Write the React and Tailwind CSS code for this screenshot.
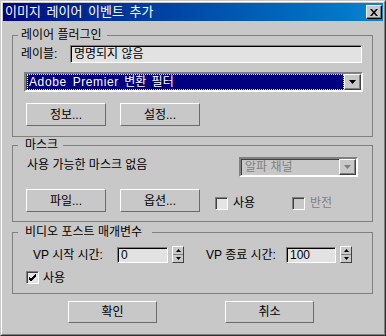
import React from "react";

function Btn({ children, className }) {
  return (
    <div
      className={
        "flex items-center justify-center border border-t-white border-l-white border-r-[#6a6a6a] border-b-[#6a6a6a] leading-[14px] " +
        className
      }
    >
      {children}
    </div>
  );
}

function Check({ checked, disabled }) {
  return (
    <div
      className={
        "w-[13px] h-[13px] border border-t-[#808080] border-l-[#808080] border-r-white border-b-white shadow-[inset_1px_1px_0_#404040] flex items-center justify-center " +
        (disabled ? "bg-[#c8c8c8]" : "bg-[#e4e4e4]")
      }
    >
      {checked && (
        <svg width="9" height="9" viewBox="0 0 9 9">
          <path d="M1 4 L3 6 L8 1 M1 5 L3 7 L8 2 M1 6 L3 8 L8 3" stroke="#000" strokeWidth="1" fill="none" />
        </svg>
      )}
    </div>
  );
}

function Arrow({ disabled }) {
  return (
    <div className="w-[17px] h-[16px] bg-[#c8c8c8] border border-t-white border-l-white border-r-[#404040] border-b-[#404040] shadow-[inset_-1px_-1px_0_#808080] flex items-center justify-center">
      <svg width="7" height="4" viewBox="0 0 7 4">
        <path d="M0 0 H7 L3.5 4 Z" fill={disabled ? "#808080" : "#000"} />
      </svg>
    </div>
  );
}

function Spinner() {
  return (
    <div className="w-[12px] h-[17px] ml-[4px] flex flex-col border border-t-white border-l-white border-r-[#404040] border-b-[#404040] bg-[#c8c8c8]">
      <div className="flex-1 flex items-center justify-center border-b border-b-[#808080]">
        <svg width="5" height="3" viewBox="0 0 5 3">
          <path d="M0 3 H5 L2.5 0 Z" fill="#000" />
        </svg>
      </div>
      <div className="flex-1 flex items-center justify-center">
        <svg width="5" height="3" viewBox="0 0 5 3">
          <path d="M0 0 H5 L2.5 3 Z" fill="#000" />
        </svg>
      </div>
    </div>
  );
}

function Field({ value, className }) {
  return (
    <div
      className={
        "border border-t-[#808080] border-l-[#808080] border-r-white border-b-white shadow-[inset_1px_1px_0_#000] bg-[#e2e2e2] flex items-center pl-[3px] leading-[14px] " +
        className
      }
    >
      {value}
    </div>
  );
}

export default function App() {
  return (
    <div className="w-[386px] h-[336px] bg-[#c8c8c8] border border-t-[#c8c8c8] border-l-[#c8c8c8] border-r-[#303030] border-b-[#303030] font-['Liberation_Sans','Noto_Sans_CJK_KR',sans-serif] text-[12px] text-black">
      <div className="h-full border border-t-white border-l-white border-r-[#808080] border-b-[#808080] p-px flex flex-col">
        <div className="h-[18px] shrink-0 flex items-center justify-between bg-linear-to-r from-[#000080] to-[#1084d0] pl-[2px] pr-[1px]">
          <span className="text-white text-[13px] leading-[18px] [word-spacing:2px]">이미지 레이어 이벤트 추가</span>
          <div className="w-[16px] h-[14px] bg-[#c8c8c8] border border-t-white border-l-white border-r-[#000] border-b-[#000] shadow-[inset_-1px_-1px_0_#808080] flex items-center justify-center">
            <svg width="8" height="7" viewBox="0 0 8 7">
              <path d="M0 0 L2 0 L4 2.5 L6 0 L8 0 L5 3.5 L8 7 L6 7 L4 4.5 L2 7 L0 7 L3 3.5 Z" fill="#000" />
            </svg>
          </div>
        </div>

        <div className="pl-[9px] pt-[7px] flex flex-col">
          {/* Group 1 */}
          <fieldset className="w-[361px] border border-[#808080]">
            <legend className="ml-[5px] pl-[3px] pr-[5px] leading-[14px] h-[14px]">레이어 플러그인</legend>
            <div className="flex flex-col pt-[3px] pb-[10px]">
              <div className="flex items-center h-[18px]">
                <span className="ml-[8px] w-[49px] leading-[14px]">레이블:</span>
                <Field value="명명되지 않음" className="w-[292px] h-[18px]" />
              </div>
              <div className="ml-[11px] mt-[9px] w-[339px] h-[20px] border-2 border-t-[#808080] border-l-[#808080] border-r-white border-b-white shadow-[inset_1px_1px_0_#404040] bg-[#c8c8c8] flex pl-px">
                <div className="flex-1 bg-[#000080] border border-dotted border-[#ffff60] text-white flex items-center pl-px leading-[14px] [word-spacing:2px]">
                  <span className="tracking-[0.6px]">Adobe Premier</span>&nbsp;변환 필터
                </div>
                <Arrow />
              </div>
              <div className="flex mt-[11px] ml-[13px]">
                <Btn className="w-[80px] h-[23px]">정보...</Btn>
                <Btn className="w-[80px] h-[23px] ml-[14px]">설정...</Btn>
              </div>
            </div>
          </fieldset>

          {/* Group 2 */}
          <fieldset className="w-[361px] mt-[1px] border border-[#808080]">
            <legend className="ml-[5px] pl-[7px] pr-[5px] leading-[14px] h-[14px]">마스크</legend>
            <div className="flex flex-col pt-[5px] pb-[9px]">
              <div className="flex items-start h-[20px]">
                <span className="ml-[14px] w-[212px] leading-[14px] pt-[1px]">사용 가능한 마스크 없음</span>
                <div className="w-[119px] h-[20px] border-2 border-t-[#808080] border-l-[#808080] border-r-white border-b-white shadow-[inset_1px_1px_0_#404040] bg-[#c8c8c8] flex pl-px">
                  <div className="flex-1 text-[#808080] flex items-center pl-[3px] leading-[14px]">알파 채널</div>
                  <Arrow disabled />
                </div>
              </div>
              <div className="flex items-center mt-[12px] ml-[13px]">
                <Btn className="w-[80px] h-[23px]">파일...</Btn>
                <Btn className="w-[80px] h-[23px] ml-[14px]">옵션...</Btn>
                <div className="flex items-center ml-[15px] w-[77px] mt-[5px]">
                  <Check />
                  <span className="ml-[5px] leading-[14px]">사용</span>
                </div>
                <div className="flex items-center mt-[5px]">
                  <Check disabled />
                  <span className="ml-[5px] leading-[14px] text-[#808080]">반전</span>
                </div>
              </div>
            </div>
          </fieldset>

          {/* Group 3 */}
          <fieldset className="w-[361px] mt-[3px] border border-[#808080]">
            <legend className="ml-[5px] pl-[7px] pr-[10px] leading-[14px] h-[14px]">비디오 포스트 매개변수</legend>
            <div className="flex flex-col pt-[7px] pb-[9px]">
              <div className="flex items-center h-[17px]">
                <span className="ml-[20px] w-[84px] leading-[14px]">VP 시작 시간:</span>
                <Field value="0" className="w-[51px] h-[16px]" />
                <Spinner />
                <span className="ml-[22px] w-[80px] leading-[14px]">VP 종료 시간:</span>
                <Field value="100" className="w-[50px] h-[16px]" />
                <Spinner />
              </div>
              <div className="flex items-center mt-[8px] ml-[13px] h-[13px]">
                <Check checked />
                <span className="ml-[4px] leading-[14px]">사용</span>
              </div>
            </div>
          </fieldset>

          <div className="flex mt-[7px] ml-[56px]">
            <Btn className="w-[89px] h-[22px]">확인</Btn>
            <Btn className="w-[89px] h-[22px] ml-[68px]">취소</Btn>
          </div>
        </div>
      </div>
    </div>
  );
}
